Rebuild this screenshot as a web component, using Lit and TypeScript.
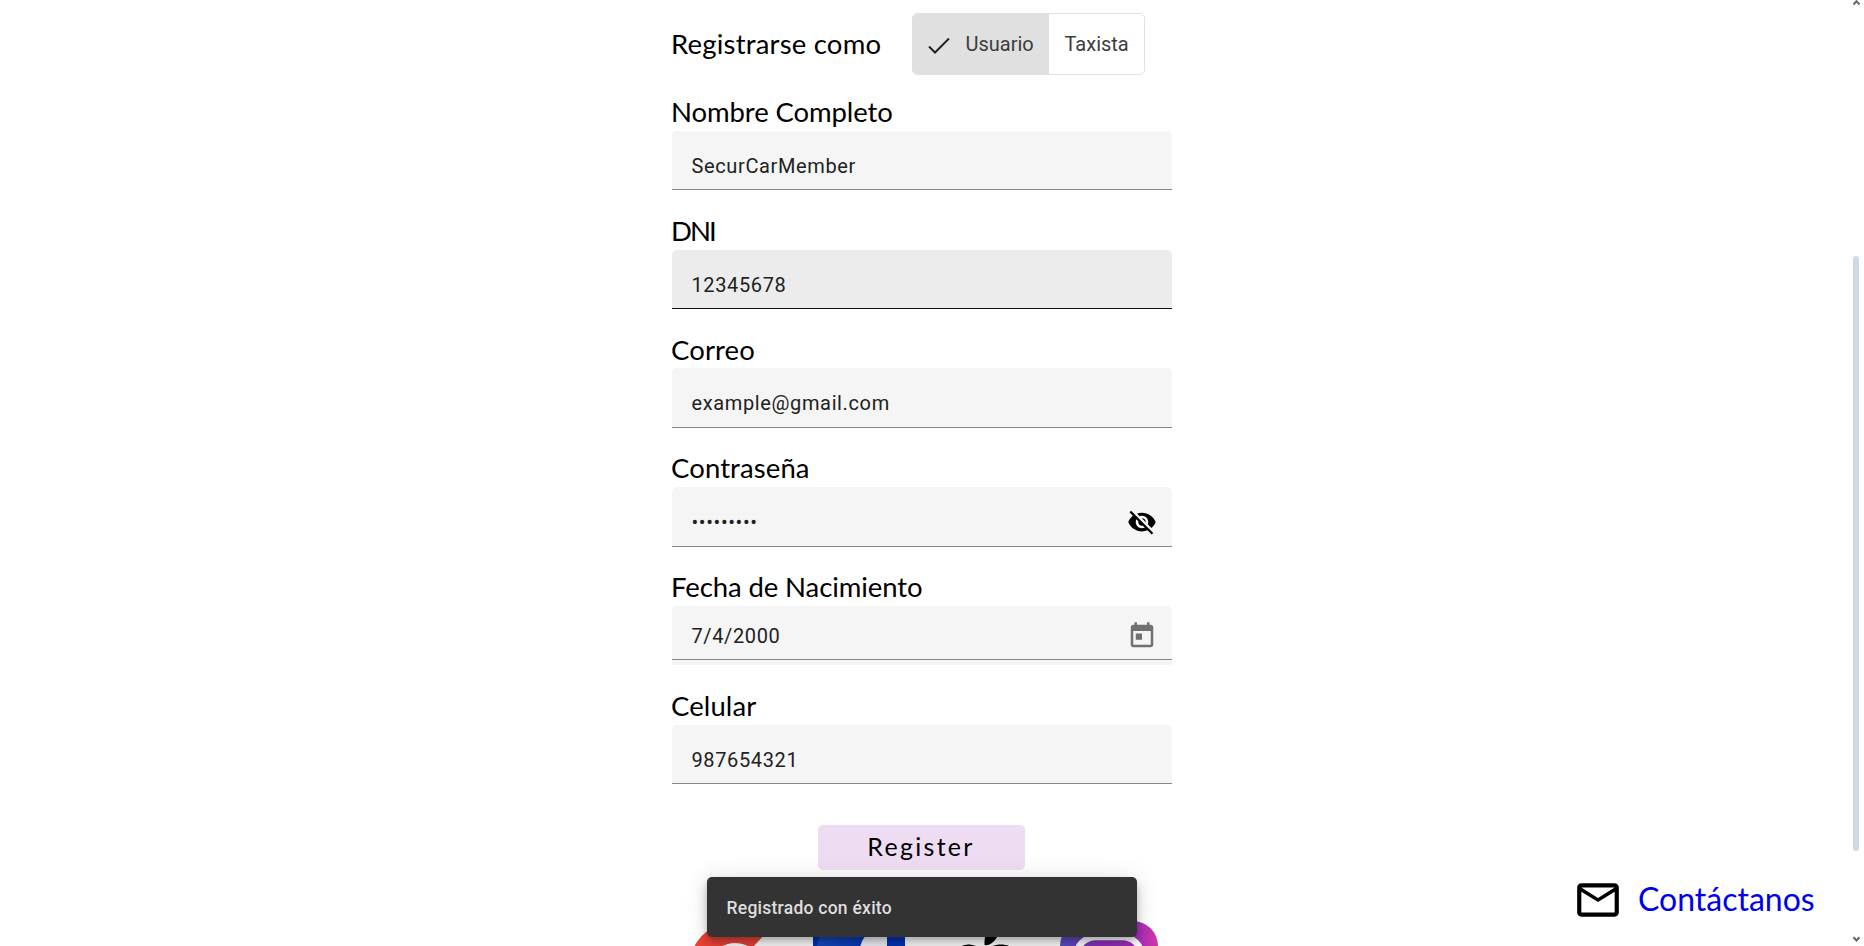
import { LitElement, html, css, svg, nothing } from "lit";
import { customElement, property } from "lit/decorators.js";

const eyeOff = svg`<path d="M12 7c2.76 0 5 2.24 5 5 0 .65-.13 1.26-.36 1.83l2.92 2.92c1.51-1.26 2.7-2.89 3.43-4.75-1.73-4.39-6-7.5-11-7.5-1.4 0-2.74.25-3.98.7l2.16 2.16C10.74 7.13 11.35 7 12 7zM2 4.27l2.28 2.28.46.46C3.08 8.3 1.78 10.02 1 12c1.73 4.39 6 7.5 11 7.5 1.55 0 3.03-.3 4.38-.84l.42.42L19.73 22 21 20.73 3.27 3 2 4.27zM7.53 9.8l1.55 1.55c-.05.21-.08.43-.08.65 0 1.66 1.34 3 3 3 .22 0 .44-.03.65-.08l1.55 1.55c-.67.33-1.41.53-2.2.53-2.76 0-5-2.24-5-5 0-.79.2-1.53.53-2.2zm4.31-.78l3.15 3.15.02-.16c0-1.66-1.34-3-3-3l-.17.01z"/>`;
const today = svg`<path d="M19 3h-1V1h-2v2H8V1H6v2H5c-1.11 0-1.99.9-1.99 2L3 19c0 1.1.89 2 2 2h14c1.1 0 2-.9 2-2V5c0-1.1-.9-2-2-2zm0 16H5V8h14v11zM7 10h5v5H7z"/>`;
const mail = svg`<path d="M22 6c0-1.1-.9-2-2-2H4c-1.1 0-2 .9-2 2v12c0 1.1.9 2 2 2h16c1.1 0 2-.9 2-2V6zm-2 0l-8 5-8-5h16zm0 12H4V8l8 5 8-5v10z"/>`;

@customElement("form-row")
class FormRow extends LitElement {
  @property() label = "";
  @property() value = "";
  @property() kind = "plain";

  static styles = css`
    :host { display: flex; flex-direction: column; height: 118.75px; }
    .label { height: 59.35px; box-sizing: border-box; display: flex; align-items: flex-end; padding-bottom: 2.9px;
      font: 27.5px/32px Lato, sans-serif; letter-spacing: -0.1px; color: #000; white-space: nowrap; }
    .label span { margin-left: -1px; }
    .label.short { letter-spacing: 0.1px; }
    .label.caps { letter-spacing: -1.9px; }
    .box { height: 59.4px; box-sizing: border-box; background: #f5f5f5; border-bottom: 1px solid #888;
      border-radius: 5px 5px 0 0; padding: 23px 15px 0 19.5px; display: flex; justify-content: space-between;
      font: 20px/24px Roboto, sans-serif; letter-spacing: 0.625px; color: #212121; }
    .hover { background: #ececec; border-bottom-color: #111; }
    .date { height: 54px; padding-top: 18.4px; }
    .foot { height: 5.4px; background: #f5f5f5; }
    .icon { width: 30px; height: 30px; flex: none; }
    .password .icon { margin: -2.700px 0.5px 0 0; }
    .password .value { letter-spacing: 0.6px; margin-top: 0; }
    .date .icon { margin-top: -3.6px; fill: #707070; }
  `;

  render() {
    const size = this.label.length < 4 ? "caps" : this.label.length < 12 ? "short" : "";
    return html`
      <div class="label ${size}"><span>${this.label}</span></div>
      <div class="box ${this.kind}">
        <span class="value">${this.value}</span>
        ${this.kind === "password" ? html`<svg class="icon" viewBox="0 0 24 24">${eyeOff}</svg>` : nothing}
        ${this.kind === "date" ? html`<svg class="icon" viewBox="0 0 24 24">${today}</svg>` : nothing}
      </div>
      ${this.kind === "date" ? html`<div class="foot"></div>` : nothing}
    `;
  }
}

@customElement("social-logos")
class SocialLogos extends LitElement {
  static styles = css`
    :host { display: flex; gap: 26px; margin-left: 17px; }
    svg { width: 98px; height: 98px; flex: none; }
    .apple { margin: 0 -2px 0 1px; }
  `;
  render() {
    return html`
      <svg viewBox="0 0 98 98">
        <path fill="#ea4335" d="M4 28A46.500 46.500 0 0 1 77 12L62.500 27.500A27 27 0 0 0 21 39Z"/>
        <path fill="#fbbc05" d="M4 28 21 39v20L4 72a47 47 0 0 1 0-44Z"/>
        <path fill="#34a853" d="M4 72 21 59a27 27 0 0 0 40 12l15 12A47 47 0 0 1 4 72Z"/>
        <path fill="#4285f4" d="M45 41h44c2 16-2 32-14 43L60 72c5-3 8-8 9-13H45Z"/>
      </svg>
      <svg viewBox="0 0 98 98">
        <defs><linearGradient id="fb" x1="0" y1="0" x2="1" y2="1"><stop stop-color="#1b4fc0"/><stop offset=".7" stop-color="#0033b8"/></linearGradient></defs>
        <path fill="#0033b8" d="M0 0H92V92H0Z"/>
        <path fill="url(#fb)" d="M3 32Q5 9 24 0H58V92H3Z"/>
        <path fill="#f1f3fb" d="M46 92V34Q47 13 62 10H74V32H66Q62 33 62 38V48H74V64H62V92Z"/>
      </svg>
      <svg class="apple" viewBox="0 0 98 98">
        <path d="M46.500 24Q45.500 7 61.500 1Q63 17 51.500 23.500Q49 24.500 46.500 24Z"/>
        <path d="M46 28C53 26 56 23.500 63 23.500c7 0 13 3 17 8-15 9-13 32 3 38-6 15-14 26-22 24-8-4-12-4-20 0C25 97 8 66 10 48c2-17 11-24 20-24.500 6 0 12 3 16 4.500Z"/>
      </svg>
      <svg viewBox="0 0 98 98">
        <defs><linearGradient id="ig" x1="0" y1=".32" x2="1" y2=".3"><stop stop-color="#5350c4"/><stop offset=".4" stop-color="#8a2fb8"/><stop offset=".8" stop-color="#a52fbb"/><stop offset="1" stop-color="#d335a6"/></linearGradient></defs>
        <rect width="98" height="98" rx="25" fill="url(#ig)"/>
        <rect x="16.500" y="16" width="65" height="65" rx="19" fill="none" stroke="#fff" stroke-width="6.500"/>
        <circle cx="49" cy="49" r="16" fill="none" stroke="#fff" stroke-width="7"/>
      </svg>`;
  }
}

@customElement("app-root")
class AppRoot extends LitElement {
  static styles = css`
    :host { display: block; position: relative; width: 100%; height: 946px; overflow: hidden; background: #fff; }
    .page { width: 500px; margin-left: 672px; display: flex; flex-direction: column; }
    .role { display: flex; align-items: center; height: 62px; margin-top: 13px; }
    .title { width: 241px; margin-left: -1px; font: 27.5px/32px Lato, sans-serif; letter-spacing: 0.2px; white-space: nowrap; }
    .toggle { display: flex; box-sizing: border-box; width: 233px; height: 62px; border: 1px solid #e0e0e0;
      border-radius: 5px; overflow: hidden; font: 20px/60px Roboto, sans-serif; color: #3c3c3c; }
    .on { width: 136px; box-sizing: border-box; background: #e0e0e0; padding-left: 14px; display: flex; align-items: center; gap: 15.5px; }
    .on svg { width: 23px; height: 23px; margin-top: 2px; }
    .off { padding-left: 15.5px; }
    .rows { margin-top: -3.450px; }
    .register { align-self: flex-start; margin: 41px 0 0 146px; width: 207px; height: 45px; border: 0; border-radius: 5px;
      background: #eeddf2; font: 25px/43px Lato, sans-serif; letter-spacing: 2.300px; color: #000; padding: 0 1px 2px 0; }
    .logos { margin-top: 51px; height: 98px; }
    .snack { position: absolute; left: 707px; top: 877px; width: 430px; height: 60px; box-sizing: border-box;
      padding: 0 19.5px; border-radius: 5px; background: #333; color: #dedede;
      font: 500 17.5px/62px Roboto, sans-serif; letter-spacing: 0.25px;
      box-shadow: 0 4px 6px -1px rgba(0,0,0,.2), 0 8px 13px 0 rgba(0,0,0,.14), 0 1px 23px 0 rgba(0,0,0,.12); }
    .contact { position: absolute; left: 1573px; top: 875px; display: flex; align-items: center; gap: 15px;
      font: 32px/48px Lato, sans-serif; color: #00e; white-space: nowrap; text-decoration: none; }
    .contact svg { width: 50px; height: 50px; fill: #000; }
    .contact span { margin-top: -3px; }
    .scroll { position: absolute; right: 4px; top: 0; width: 7px; height: 942px; display: flex; flex-direction: column; }
    .scroll svg { width: 7px; height: 6px; flex: none; }
    .thumb { width: 6px; height: 595px; margin: 250px 0 auto; border-radius: 3px; background: #cfd9e2; }
  `;

  private rows = [
    ["Nombre Completo", "SecurCarMember", "plain"],
    ["DNI", "12345678", "hover"],
    ["Correo", "example@gmail.com", "plain"],
    ["Contraseña", "•••••••••", "password"],
    ["Fecha de Nacimiento", "7/4/2000", "date"],
    ["Celular", "987654321", "plain"],
  ];

  render() {
    return html`
      <div class="page">
        <div class="role">
          <span class="title">Registrarse como</span>
          <div class="toggle">
            <div class="on">
              <svg viewBox="0 0 23 23" fill="none" stroke="#222" stroke-width="2"><path d="M2 12.500 8 18.500 22 4.500"/></svg>
              <span>Usuario</span>
            </div>
            <div class="off">Taxista</div>
          </div>
        </div>
        <div class="rows">
          ${this.rows.map(([l, v, k]) => html`<form-row .label=${l} .value=${v} .kind=${k}></form-row>`)}
        </div>
        <button class="register">Register</button>
        <social-logos class="logos"></social-logos>
      </div>
      <div class="snack">Registrado con éxito</div>
      <a class="contact"><svg viewBox="0 0 24 24">${mail}</svg><span>Contáctanos</span></a>
      <div class="scroll">
        <svg viewBox="0 0 7 6" fill="none" stroke="#666" stroke-width="2"><path d="M0.500 4.500 3.500 1.200 6.500 4.500"/></svg>
        <div class="thumb"></div>
        <svg viewBox="0 0 7 6" fill="none" stroke="#666" stroke-width="2"><path d="M0.500 1.200 3.500 4.500 6.500 1.200"/></svg>
      </div>`;
  }
}
